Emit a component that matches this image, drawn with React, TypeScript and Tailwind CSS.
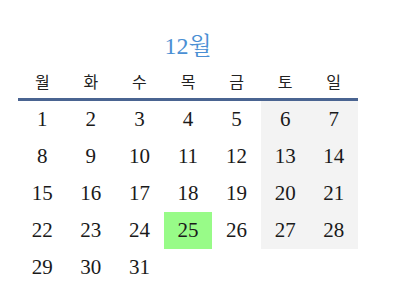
import React from "react";

const days = ["월", "화", "수", "목", "금", "토", "일"];

export default function App() {
  const cells: (number | null)[] = [];
  for (let i = 1; i <= 31; i++) cells.push(i);
  while (cells.length < 35) cells.push(null);
  return (
    <div
      className="w-[395px] h-[295px] bg-white pt-[32px] pl-[18px]"
      style={{ fontFamily: '"Liberation Serif", "Noto Serif CJK KR", "Noto Sans CJK KR", serif' }}
    >
      <div className="w-[340px]">
        <div className="h-[28px] flex items-center justify-center text-[24px] text-[#4a8fd4] leading-none">
          12월
        </div>
        <div className="grid grid-cols-7 h-[41px] pt-[4px] items-center border-b-[3px] border-[#4a6491] text-[16px] text-[#222]">
          {days.map((d) => (
            <div key={d} className="text-center leading-none" style={{ fontFamily: '"Noto Sans CJK KR", sans-serif' }}>
              {d}
            </div>
          ))}
        </div>
        <div className="grid grid-cols-7">
          {cells.map((n, i) => {
            const col = i % 7;
            const row = Math.floor(i / 7);
            let bg = "";
            if (n === 25) bg = "bg-[#98fb88]";
            else if (col >= 5 && row < 4) bg = "bg-[#f3f3f3]";
            return (
              <div
                key={i}
                className={`h-[37px] flex items-center justify-center text-[21px] text-[#1a1a1a] ${bg}`}
              >
                {n ?? ""}
              </div>
            );
          })}
        </div>
      </div>
    </div>
  );
}
